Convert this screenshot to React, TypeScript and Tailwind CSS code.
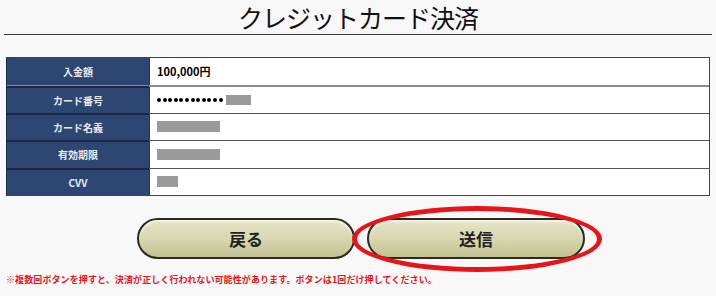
import React from 'react';

const FONT = { fontFamily: '"Noto Sans CJK JP", "Noto Sans", sans-serif' };

const Bar = ({ w }: { w: string }) => <span className={`inline-block h-[11px] bg-[#9a9a9a] ${w}`} />;

const rows: { label: string; value: React.ReactNode }[] = [
  { label: '入金額', value: <span className="text-[11px] font-bold text-black">100,000円</span> },
  {
    label: 'カード番号',
    value: (
      <span className="flex items-center gap-[3px]">
        <span className="flex items-center gap-[1.6px]">
          {Array.from({ length: 12 }).map((_, i) => (
            <span key={i} className="inline-block h-[4px] w-[4px] rounded-full bg-black" />
          ))}
        </span>
        <span className="inline-block h-[10px] w-[25px] bg-[#9a9a9a]" />
      </span>
    ),
  },
  { label: 'カード名義', value: <Bar w="w-[63px]" /> },
  { label: '有効期限', value: <Bar w="w-[63px]" /> },
  { label: 'CVV', value: <Bar w="w-[21px]" /> },
];

const App: React.FC = () => {
  return (
    <div className="min-h-screen w-full bg-[#f8f8f8] text-black" style={FONT}>
      {/* Title */}
      <div className="mx-[4px] flex h-[35px] items-end justify-center border-b border-[#3a3a3a]">
        <h1 className="pb-[2px] text-[25px] leading-[30px] font-normal tracking-[-1px] text-[#111]">クレジットカード決済</h1>
      </div>

      {/* Table */}
      <div className="mx-[6px] mt-[22px] border border-[#444] border-l-[#1d2c47] bg-white">
        {rows.map((r, i) => (
          <div
            key={r.label}
            className={`flex h-[27.4px] ${i > 0 ? (i === 1 ? 'border-t-2 border-[#8a8a8a]' : 'border-t border-[#555]') : ''}`}
          >
            <div
              className={`flex w-[142px] shrink-0 items-center justify-center bg-[#2d4672] text-[10px] font-bold text-[#e8ecf2] ${
                i > 0 ? '-mt-[1px] border-t-2 border-[#1a2845]' : ''
              }`}
            >
              {r.label}
            </div>
            <div className="flex flex-1 items-center border-l border-[#333] pl-[7px]">{r.value}</div>
          </div>
        ))}
      </div>

      {/* Buttons */}
      <div className="relative mt-[22px] flex justify-center gap-[12px] pl-[6px]">
        <button className="flex h-[41px] w-[218px] items-center justify-center rounded-full border-2 border-[#2b2b22] bg-gradient-to-b from-[#e6e5c8] via-[#d8d7b0] to-[#c3c192] text-[17px] font-bold text-[#222] shadow-[inset_0_2px_2px_rgba(255,255,255,0.6)]">
          戻る
        </button>
        <div className="relative">
          <button className="flex h-[41px] w-[218px] items-center justify-center rounded-full border-2 border-[#2b2b22] bg-gradient-to-b from-[#e6e5c8] via-[#d8d7b0] to-[#c3c192] text-[17px] font-bold text-[#222] shadow-[inset_0_2px_2px_rgba(255,255,255,0.6)]">
            送信
          </button>
          <div className="pointer-events-none absolute -top-[12px] -left-[15px] h-[66px] w-[250px] rounded-[50%] border-[5px] border-[#e8141a]" />
        </div>
      </div>

      {/* Note */}
      <p className="mt-[14px] pl-[6px] text-[9px] font-bold tracking-[0.1px] text-[#e8141a]">
        ※複数回ボタンを押すと、決済が正しく行われない可能性があります。ボタンは1回だけ押してください。
      </p>
    </div>
  );
};

export default App;
